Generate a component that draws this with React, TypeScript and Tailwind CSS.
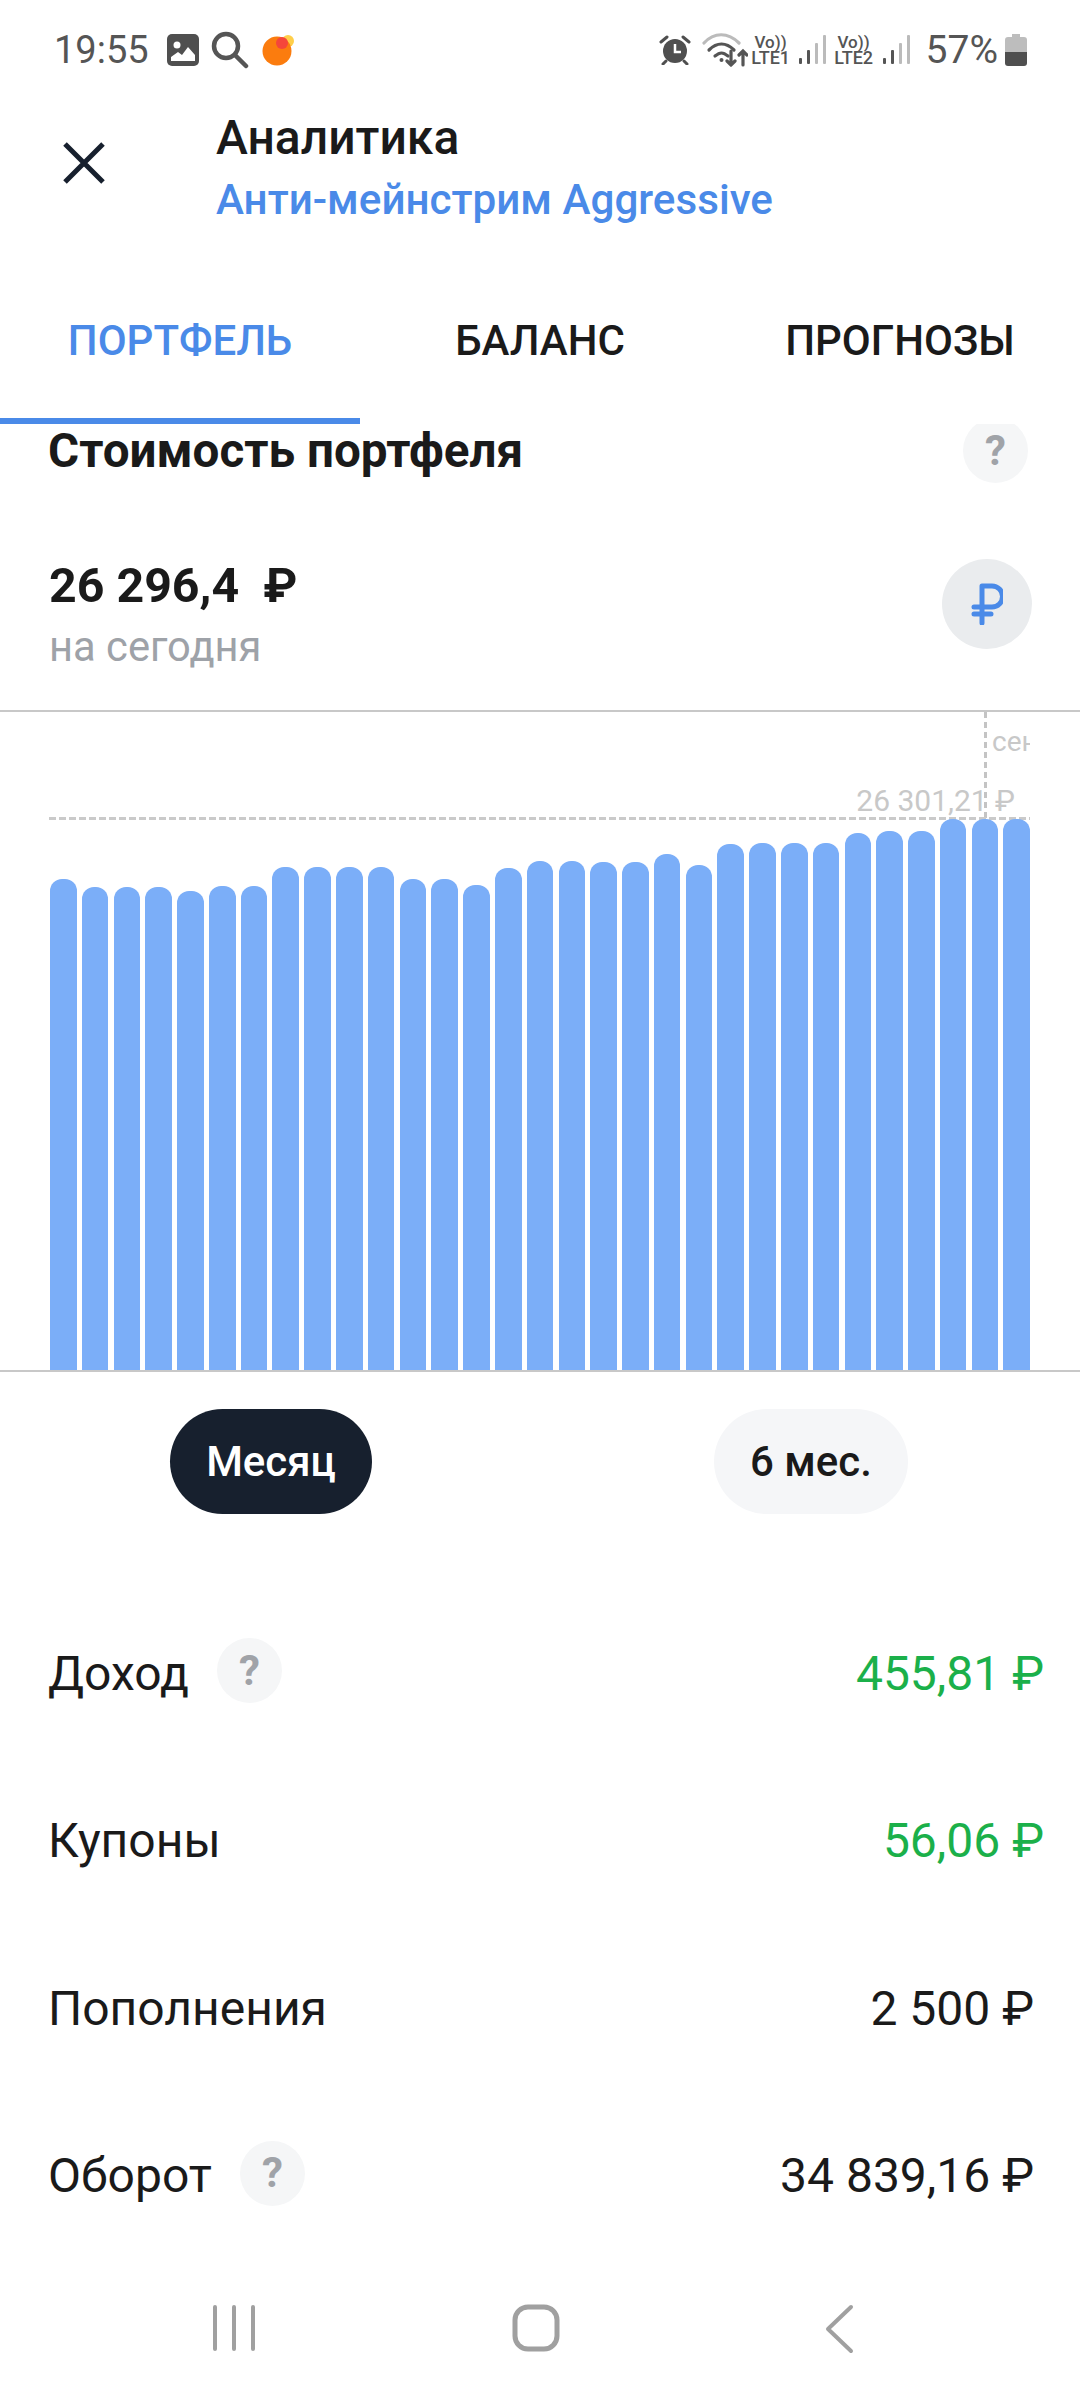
import React from "react";

const tops = [879,887,887,887,891,886,886,867,867,867,867,879,879,885,868,861,861,862,862,854,865,844,843,843,843,833,831,831,819,819,819];

function Q({ className }: { className: string }) {
  return (
    <div className={"flex h-[65px] w-[65px] shrink-0 items-center justify-center rounded-full bg-[#f5f6f7] text-[42px] font-bold leading-none text-[#a0a3a8] " + className}>?</div>
  );
}

function Signal() {
  return (
    <svg width="28" height="30" viewBox="0 0 28 30" className="shrink-0">
      <rect x="0" y="23" width="3" height="6" rx="1" fill="#555" />
      <rect x="8" y="15" width="3" height="14" rx="1" fill="#555" />
      <rect x="16" y="8" width="3" height="21" rx="1" fill="#bbb" />
      <rect x="24" y="0" width="3" height="29" rx="1" fill="#bbb" />
    </svg>
  );
}

function Lte({ n }: { n: string }) {
  return (
    <div className="flex w-[40px] shrink-0 flex-col items-center text-[#555]">
      <span className="h-[15px] text-[17px] font-medium leading-[15px]">Vo))</span>
      <span className="h-[15px] text-[18px] font-medium leading-[15px]">LTE{n}</span>
    </div>
  );
}

function Row({ label, value, green, help }: { label: string; value: string; green?: boolean; help?: boolean }) {
  return (
    <div className="flex h-[167.5px] items-center justify-between">
      <div className="flex items-center">
        <span className="text-[48px] leading-none text-[#1a1a1a]">{label}</span>
        {help && <Q className="ml-[28px] -mt-[6px]" />}
      </div>
      <span className={green ? "-mr-[10px] text-[48px] leading-none text-[#1bb04a]" : "text-[48px] leading-none text-[#1a1a1a]"}>{value}</span>
    </div>
  );
}

export default function App() {
  return (
    <div className="flex h-[2400px] w-[1080px] flex-col overflow-hidden bg-white font-['Roboto',sans-serif]">
      {/* status bar */}
      <div className="flex h-[100px] shrink-0 items-center pl-[54px] pr-[53px]">
        <span className="text-[38px] leading-none text-[#555]">19:55</span>
        <svg width="32" height="32" viewBox="0 0 32 32" className="ml-[18px]">
          <rect width="32" height="32" rx="5" fill="#4f4f4f" />
          <circle cx="10" cy="11" r="3.5" fill="#fff" />
          <path d="M4 27v-4l7-5 4 3 6-8 7 8v6z" fill="#fff" />
        </svg>
        <svg width="38" height="38" viewBox="0 0 38 38" className="ml-[12px]" fill="none" stroke="#555" strokeWidth="4.5" strokeLinecap="round">
          <circle cx="15" cy="15" r="12" />
          <path d="M24 24l11 11" />
        </svg>
        <svg width="32" height="32" viewBox="0 0 32 32" className="ml-[13px]">
          <circle cx="26" cy="7" r="6" fill="#ffcf4a" />
          <circle cx="15" cy="17" r="14.5" fill="#fb7c0e" />
          <circle cx="20" cy="9" r="6" fill="#f5463a" />
        </svg>
        <div className="flex-1" />
        <svg width="32" height="30" viewBox="0 0 32 30" className="shrink-0">
          <circle cx="16" cy="16" r="12" fill="#4f4f4f" />
          <path d="M16 9v8h6" stroke="#fff" strokeWidth="2.5" fill="none" />
          <path d="M2 7l6-5M30 7l-6-5M7 26l-3 3M25 26l3 3" stroke="#4f4f4f" strokeWidth="3" strokeLinecap="round" />
        </svg>
        <svg width="46" height="34" viewBox="0 0 46 34" className="ml-[11px] shrink-0" fill="none" strokeWidth="3.2" strokeLinecap="round">
          <path d="M2 10C12 -1 26 -1 37 10" stroke="#bbb" />
          <path d="M7 17c8-8 17-8 25 0" stroke="#555" />
          <path d="M13 23c5-4 8-4 13 0" stroke="#555" />
          <circle cx="19.5" cy="27" r="2" fill="#555" stroke="none" />
          <path d="M29 18v14M25 28l4 4 4-4M41 32V18M37 22l4-4 4 4" stroke="#555" />
        </svg>
        <div className="ml-[3px]"><Lte n="1" /></div>
        <div className="ml-[8px]"><Signal /></div>
        <div className="ml-[7px]"><Lte n="2" /></div>
        <div className="ml-[9px]"><Signal /></div>
        <span className="ml-[15px] text-[39px] leading-none text-[#555]">57%</span>
        <svg width="22" height="32" viewBox="0 0 22 32" className="ml-[7px] shrink-0">
          <path d="M7 0h8v3h4a3 3 0 0 1 3 3v12H0V6a3 3 0 0 1 3-3h4z" fill="#bdbdbd" />
          <path d="M0 18h22v11a3 3 0 0 1-3 3H3a3 3 0 0 1-3-3z" fill="#4f4f4f" />
        </svg>
      </div>

      {/* header */}
      <div className="flex h-[125px] shrink-0">
        <div className="flex w-[216px] shrink-0 items-center pl-[62px]">
          <svg width="44" height="44" viewBox="0 0 44 44" fill="none" stroke="#17202e" strokeWidth="5">
            <path d="M3 3l38 38M41 3L3 41" />
          </svg>
        </div>
        <div className="flex flex-col">
          <span className="mt-[11px] text-[48px] font-medium leading-[54px] text-[#1a1a1a]">Аналитика</span>
          <span className="mt-[11px] text-[42.2px] font-medium leading-[48px] text-[#4a8ae8]">Анти-мейнстрим Aggressive</span>
        </div>
      </div>

      {/* tabs */}
      <div className="relative z-10 flex h-[199px] shrink-0 items-center bg-white pt-[32px]">
        <div className="flex w-[360px] justify-center text-[42px] font-medium leading-none text-[#4a8ae8]">ПОРТФЕЛЬ</div>
        <div className="flex w-[360px] justify-center text-[42px] font-medium leading-none text-[#1a1a1a]">БАЛАНС</div>
        <div className="flex w-[360px] justify-center text-[42px] font-medium leading-none text-[#1a1a1a]">ПРОГНОЗЫ</div>
        <div className="absolute bottom-0 left-0 h-[6px] w-[360px] bg-[#4a8ae8]" />
      </div>

      {/* scrolled content */}
      <div className="min-h-0 flex-1 overflow-hidden">
        <div className="-mt-[6px] flex items-center justify-between pl-[48px] pr-[52px]">
          <span className="text-[47.6px] font-bold leading-[50px] text-[#1a1a1a]">Стоимость портфеля</span>
          <Q className="" />
        </div>
        <div className="mt-[76px] flex items-start justify-between pl-[49px] pr-[48px]">
          <div className="flex flex-col">
            <span className="text-[48.3px] font-bold leading-[54px] text-[#1a1a1a]">26 296,4&nbsp; ₽</span>
            <span className="mt-[10px] text-[41.7px] leading-[48px] text-[#9ea2a8]">на сегодня</span>
          </div>
          <div className="flex h-[90px] w-[90px] items-center justify-center rounded-full bg-[#eaecee]">
            <svg width="32" height="42" viewBox="0 0 32 42" fill="none" stroke="#4a8ae8" strokeWidth="5" strokeLinecap="round" strokeLinejoin="round">
              <path d="M11 40V3h10a10 10 0 0 1 0 21H3M3 31h17" />
            </svg>
          </div>
        </div>

        {/* chart */}
        <div className="relative mt-[39px] h-[662px] border-y-2 border-[#c8c8c8]">
          <div className="absolute left-[984px] top-0 h-[108px] w-[3px] bg-[repeating-linear-gradient(180deg,#c4c4c4_0_6px,transparent_6px_10px)]" />
          <div className="absolute left-[992px] top-[13px] w-[38px] overflow-hidden whitespace-nowrap text-[28px] leading-[34px] text-[#c8c8c8]">сен</div>
          <div className="absolute right-[65px] top-[72px] text-[30px] leading-[34px] text-[#c8c8c8]">26 301,21 ₽</div>
          <div className="absolute left-[49px] top-[105px] h-[3px] w-[981px] bg-[repeating-linear-gradient(90deg,#cacaca_0_7px,transparent_7px_10px)]" />
          <div className="absolute bottom-0 left-[50px] flex h-full items-end gap-[5.2px]">
            {tops.map((t, i) => (
              <div key={i} className="w-[26.6px] rounded-t-[12px] bg-[#7baef8]" style={{ height: 1370 - t }} />
            ))}
          </div>
        </div>

        {/* period pills */}
        <div className="mt-[37px] flex">
          <div className="ml-[170px] flex h-[105px] w-[202px] items-center justify-center rounded-full bg-[#17202e] text-[42px] font-medium leading-none text-white">Месяц</div>
          <div className="ml-[342px] flex h-[105px] w-[194px] items-center justify-center rounded-full bg-[#f5f6f8] text-[42px] font-medium leading-none text-[#1a1a1a]">6 мес.</div>
        </div>

        {/* rows */}
        <div className="mt-[76px] pl-[48px] pr-[46px]">
          <Row label="Доход" value="455,81 ₽" green help />
          <Row label="Купоны" value="56,06 ₽" green />
          <Row label="Пополнения" value="2 500 ₽" />
          <Row label="Оборот" value="34 839,16 ₽" help />
        </div>
      </div>

      {/* nav bar */}
      <div className="relative h-[0px] shrink-0">
        <div className="absolute bottom-[46px] left-0 flex w-full">
          <svg width="44" height="48" viewBox="0 0 44 48" className="ml-[212px]" fill="none" stroke="#a0a0a0" strokeWidth="4" strokeLinecap="round">
            <path d="M3 3v42M22 3v42M41 3v42" />
          </svg>
          <svg width="48" height="48" viewBox="0 0 48 48" className="ml-[256px]" fill="none" stroke="#a0a0a0" strokeWidth="5">
            <rect x="3" y="3" width="42" height="42" rx="13" />
          </svg>
          <svg width="30" height="50" viewBox="0 0 30 50" className="ml-[264px]" fill="none" stroke="#a0a0a0" strokeWidth="4" strokeLinecap="round" strokeLinejoin="round">
            <path d="M27 3L4 25l23 22" />
          </svg>
        </div>
      </div>
    </div>
  );
}
